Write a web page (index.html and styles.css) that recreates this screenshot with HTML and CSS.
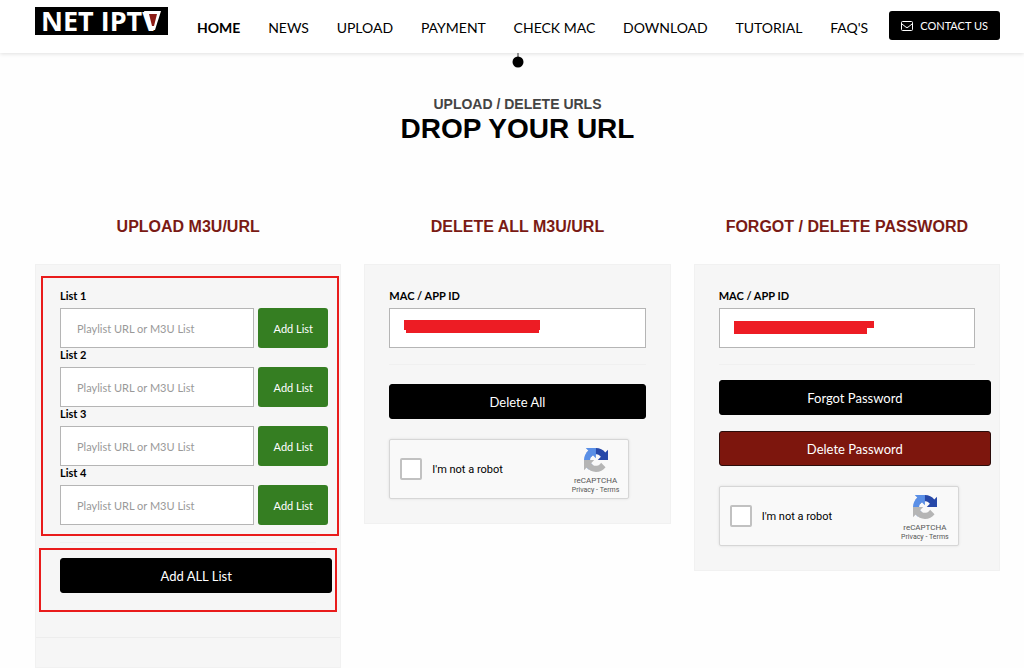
FILE: index.html
```html
<!DOCTYPE html>
<html lang="en">
<head>
    <meta charset="UTF-8">
    <meta name="viewport" content="width=device-width, initial-scale=1.0">
    <title>NET IPTV - Upload</title>
    <link rel="stylesheet" href="styles.css">
</head>
<body>
    <svg class="sprite" aria-hidden="true">
        <symbol id="recaptcha-logo" viewBox="0 0 64 64">
            <path fill="#2748a8" d="M64 31.955l-.033-1.37V4.687l-7.16 7.16C50.948 4.674 42.033.093 32.05.093c-10.4 0-19.622 4.96-25.458 12.64l11.736 11.86a15.55 15.55 0 0 1 4.754-5.334c2.05-1.6 4.952-2.906 8.968-2.906.485 0 .86.057 1.135.163 4.976.393 9.288 3.14 11.828 7.124l-8.307 8.307L64 31.953"/>
            <path fill="#5a8fe6" d="M31.862.094l-1.37.033H4.594l7.16 7.16C4.58 13.147 0 22.06 0 32.046c0 10.4 4.96 19.622 12.64 25.458L24.5 45.768a15.55 15.55 0 0 1-5.334-4.754c-1.6-2.05-2.906-4.952-2.906-8.968 0-.485.057-.86.163-1.135.393-4.976 3.14-9.288 7.124-11.828l8.307 8.307L31.86.095"/>
            <path fill="#b5b5b5" d="M.001 32.045l.033 1.37v25.898l7.16-7.16c5.86 7.173 14.774 11.754 24.76 11.754 10.4 0 19.622-4.96 25.458-12.64l-11.736-11.86a15.55 15.55 0 0 1-4.754 5.334c-2.05 1.6-4.952 2.906-8.968 2.906-.485 0-.86-.057-1.135-.163-4.976-.393-9.288-3.14-11.828-7.124l8.307-8.307c-10.522.04-22.4.066-27.295-.005"/>
        </symbol>
    </svg>

    <header class="site-header">
        <a class="logo" href="#" aria-label="NET IPTV">
            <svg width="133" height="28" viewBox="0 0 133 28">
                <rect width="133" height="28" fill="#000"/>
                <text class="logo-text" x="6" y="24">NET IPTV</text>
                <path d="M109 4h17l-6 19h-5z" fill="#fff"/>
                <path d="M114 7h8l-3 12h-2z" fill="#8c1c16"/>
            </svg>
        </a>
        <nav class="main-nav">
            <a class="active" href="#">HOME</a>
            <a href="#">NEWS</a>
            <a href="#">UPLOAD</a>
            <a href="#">PAYMENT</a>
            <a href="#">CHECK MAC</a>
            <a href="#">DOWNLOAD</a>
            <a href="#">TUTORIAL</a>
            <a href="#">FAQ'S</a>
        </nav>
        <a class="contact-button" href="#">
            <svg width="12" height="10" viewBox="0 0 12 10" fill="none" stroke="#fff">
                <rect x="0.5" y="0.5" width="11" height="9" rx="1"/>
                <path d="M1 3l4 3.2q1 .7 2 0L11 3"/>
            </svg>
            CONTACT US
        </a>
    </header>

    <main class="page">
        <!-- Title Section -->
        <div class="title-section">
            <svg class="title-dot" width="12" height="15" viewBox="0 0 12 15">
                <path d="M6 0v5" stroke="#333"/>
                <circle cx="6" cy="9" r="5.5"/>
            </svg>
            <p class="subtitle">UPLOAD / DELETE URLS</p>
            <h1>DROP YOUR URL</h1>
        </div>

        <div class="columns">
            <!-- Upload -->
            <section class="column column-upload">
                <h2>UPLOAD M3U/URL</h2>
                <form class="panel">
                    <div class="marked lists">
                        <label for="list1">List 1</label>
                        <div class="list-row">
                            <input type="text" id="list1" placeholder="Playlist URL or M3U List">
                            <button type="button" class="add-button">Add List</button>
                        </div>
                        <label for="list2">List 2</label>
                        <div class="list-row">
                            <input type="text" id="list2" placeholder="Playlist URL or M3U List">
                            <button type="button" class="add-button">Add List</button>
                        </div>
                        <label for="list3">List 3</label>
                        <div class="list-row">
                            <input type="text" id="list3" placeholder="Playlist URL or M3U List">
                            <button type="button" class="add-button">Add List</button>
                        </div>
                        <label for="list4">List 4</label>
                        <div class="list-row">
                            <input type="text" id="list4" placeholder="Playlist URL or M3U List">
                            <button type="button" class="add-button">Add List</button>
                        </div>
                    </div>
                    <hr>
                    <div class="marked add-all">
                        <button type="button" class="button wide">Add ALL List</button>
                    </div>
                    <hr class="full">
                </form>
            </section>

            <!-- Delete -->
            <section class="column">
                <h2>DELETE ALL M3U/URL</h2>
                <form class="panel">
                    <label for="macDelete">MAC / APP ID</label>
                    <div class="mac-field">
                        <input type="text" id="macDelete">
                        <svg class="redacted" width="140" height="14" viewBox="0 0 140 14" aria-hidden="true">
                            <path d="M0 0h136v10h-1v3H2v-3H0z"/>
                        </svg>
                    </div>
                    <hr>
                    <button type="button" class="button delete-all">Delete All</button>
                    <div class="captcha">
                        <input type="checkbox" id="robotDelete">
                        <label for="robotDelete">I'm not a robot</label>
                        <div class="captcha-brand">
                            <svg width="24" height="24"><use href="#recaptcha-logo"/></svg>
                            <span class="captcha-name">reCAPTCHA</span>
                            <span class="captcha-links"><a href="#">Privacy</a> - <a href="#">Terms</a></span>
                        </div>
                    </div>
                </form>
            </section>

            <!-- Password -->
            <section class="column">
                <h2>FORGOT / DELETE PASSWORD</h2>
                <form class="panel">
                    <label for="macPassword">MAC / APP ID</label>
                    <div class="mac-field">
                        <input type="text" id="macPassword">
                        <svg class="redacted" width="140" height="14" viewBox="0 0 140 14" aria-hidden="true">
                            <path d="M0 1h140v7h-7v6H0z"/>
                        </svg>
                    </div>
                    <hr>
                    <button type="button" class="button wide">Forgot Password</button>
                    <button type="button" class="button wide danger">Delete Password</button>
                    <div class="captcha">
                        <input type="checkbox" id="robotPassword">
                        <label for="robotPassword">I'm not a robot</label>
                        <div class="captcha-brand">
                            <svg width="24" height="24"><use href="#recaptcha-logo"/></svg>
                            <span class="captcha-name">reCAPTCHA</span>
                            <span class="captcha-links"><a href="#">Privacy</a> - <a href="#">Terms</a></span>
                        </div>
                    </div>
                </form>
            </section>
        </div>
    </main>
</body>
</html>
```
FILE: styles.css
```css
/* Base Styles */
* {
    margin: 0;
    padding: 0;
    box-sizing: border-box;
}

body {
    display: flex;
    flex-direction: column;
    min-height: 100vh;
    font-family: Lato, sans-serif;
    color: #000;
    background-color: #fefefe;
}

a {
    color: inherit;
    text-decoration: none;
}

svg {
    display: block;
    flex: none;
}

.sprite {
    position: absolute;
    width: 0;
    height: 0;
}

/* Header */
.site-header {
    display: flex;
    align-items: flex-start;
    height: 53px;
    padding: 0 24px 0 35px;
    background-color: #fff;
    box-shadow: 0 1px 4px rgba(0, 0, 0, 0.12);
}

.logo {
    margin-top: 7px;
}

.logo svg {
    overflow: visible;
}

.logo-text {
    font-family: "Open Sans", sans-serif;
    font-size: 27px;
    font-weight: 700;
    fill: #fff;
}

.main-nav {
    display: flex;
    flex: 1;
    justify-content: space-between;
    margin: 18px 21px 0 29px;
    font-size: 14px;
    line-height: 20px;
    white-space: nowrap;
}

.main-nav .active {
    font-weight: 700;
}

.contact-button {
    display: flex;
    align-items: center;
    gap: 7px;
    height: 29px;
    margin-top: 11px;
    padding: 0 12px;
    border-radius: 3px;
    font-size: 11px;
    color: #fff;
    background-color: #000;
    white-space: nowrap;
}

/* Page */
.page {
    display: flex;
    flex-direction: column;
    flex: 1;
    padding: 0 24px 0 35px;
}

.title-section {
    display: flex;
    flex-direction: column;
    align-items: center;
    font-family: "Liberation Sans", sans-serif;
}

.subtitle {
    margin-top: 28px;
    font-size: 14px;
    font-weight: 700;
    line-height: 16px;
    color: #444;
}

h1 {
    font-size: 28px;
    line-height: 34px;
}

.columns {
    display: grid;
    grid-template-columns: repeat(3, 1fr);
    gap: 23px;
    flex: 1;
    align-items: start;
    margin-top: 71px;
}

.column-upload {
    display: flex;
    flex-direction: column;
    align-self: stretch;
}

.column-upload .panel {
    flex: 1;
}

h2 {
    margin-bottom: 27px;
    font-family: "Liberation Sans", sans-serif;
    font-size: 16px;
    line-height: 20px;
    text-align: center;
    color: #7a1a14;
}

/* Panels */
.panel {
    padding: 24px;
    border: 1px solid #f1f1f1;
    background-color: #f6f6f6;
}

.panel label {
    display: block;
    font-size: 11px;
    font-weight: 700;
    line-height: 13px;
    padding-bottom: 6px;
}

.panel input[type="text"] {
    display: block;
    width: 100%;
    height: 40px;
    padding: 0 16px;
    border: 1px solid #b5b5b5;
    font-family: inherit;
    font-size: 11px;
    background-color: #fff;
}

.panel input::placeholder {
    color: #999;
}

.panel hr {
    margin: 16px 0 15px;
    border: none;
    border-top: 1px solid #f0f0f0;
}

.panel hr.full {
    margin: 44px -24px 0;
    border-color: #ededed;
}

.list-row {
    display: flex;
    gap: 4px;
    margin-right: -12px;
}

.add-button {
    flex: none;
    width: 70px;
    border: none;
    border-radius: 3px;
    font-family: inherit;
    font-size: 11px;
    color: #fff;
    background-color: #357e22;
}

.button {
    display: block;
    width: 100%;
    height: 35px;
    border: 1px solid #000;
    border-radius: 3px;
    font-family: inherit;
    font-size: 13px;
    color: #fff;
    background-color: #000;
}

.button.wide {
    width: calc(100% + 16px);
}

.button.danger {
    margin-top: 16px;
    border-color: #2b0c0a;
    background-color: #7d160d;
}

.delete-all {
    margin-top: 19px;
}

.add-button,
.button {
    cursor: pointer;
}

/* Red outlines and bars over the form */
.marked {
    position: relative;
}

.marked::after {
    content: "";
    position: absolute;
    border: 2px solid #e91c1c;
    pointer-events: none;
}

.lists {
    padding-bottom: 1px;
}

.lists::after {
    inset: -13px -23px -10px -19px;
}

.add-all::after {
    inset: -10px -21px -19px -21px;
}

.mac-field {
    position: relative;
}

.redacted {
    position: absolute;
    left: 15px;
    top: 12px;
    fill: #ed1c24;
}

/* Captcha */
.captcha {
    display: flex;
    align-items: center;
    width: 240px;
    height: 60px;
    margin-top: 20px;
    padding: 0 9px 0 10px;
    border: 1px solid #d6d6d6;
    border-radius: 2px;
    box-shadow: 0 0 3px rgba(0, 0, 0, 0.1);
    font-family: Roboto, sans-serif;
    background-color: #f9f9f9;
}

.captcha input {
    appearance: none;
    width: 22px;
    height: 22px;
    border: 2px solid #c1c1c1;
    border-radius: 2px;
    background-color: #fff;
}

.captcha label {
    flex: 1;
    margin-left: 10px;
    padding: 0;
    font-weight: 400;
}

.captcha-brand {
    display: flex;
    flex-direction: column;
    align-items: center;
    padding-top: 3px;
    color: #555;
    white-space: nowrap;
}

.captcha-name {
    margin-top: 3px;
    font-size: 8px;
    line-height: 11px;
}

.captcha-links {
    font-size: 7px;
    line-height: 8px;
}

/* Responsive */
@media (max-width: 768px) {
    .site-header {
        flex-wrap: wrap;
        height: auto;
    }

    .main-nav {
        flex-wrap: wrap;
    }

    .columns {
        grid-template-columns: 1fr;
    }
}
```
